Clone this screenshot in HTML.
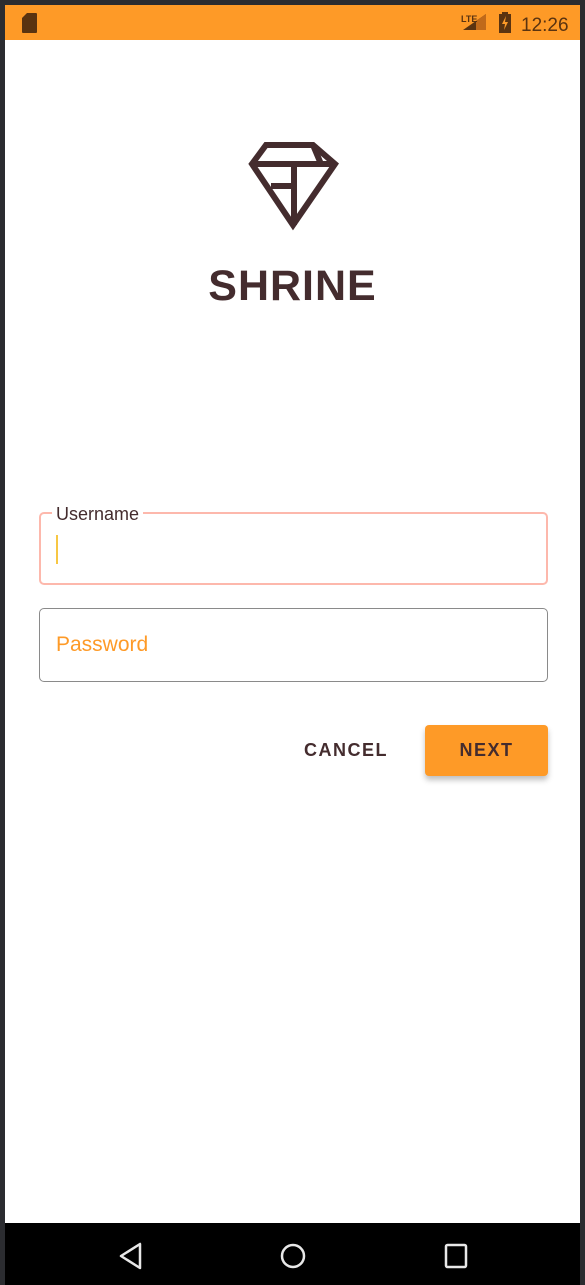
<!DOCTYPE html>
<html><head><style>
body{margin:0;width:585px;height:1285px;background:#2b2c30;position:relative;overflow:hidden;font-family:"Liberation Sans",sans-serif}
.scr{position:absolute;left:5px;top:5px;width:575px;height:1218px;background:#fff}
.sb{position:absolute;left:5px;top:5px;width:575px;height:35px;background:#fe9a27}
.nav{position:absolute;left:5px;top:1223px;width:575px;height:62px;background:#000}
.t{position:absolute;color:#442c2e}
</style></head><body>
<div class="scr"></div>
<div class="sb"></div>
<svg style="position:absolute;left:0;top:0" width="585" height="40">
<path d="M27 13h9a1 1 0 0 1 1 1v18a1 1 0 0 1-1 1h-13a1 1 0 0 1-1-1v-14z" fill="#5a3310"/>
<path d="M463 30l23-16v16z" fill="#5a3310"/><path d="M476 21l10-7v16h-10z" fill="#c06a1a"/>
<text x="461" y="22" font-size="9" font-weight="bold" fill="#5a3310" font-family="Liberation Sans">LTE</text>
<rect x="499" y="14" width="12" height="19" fill="#5a3310"/><rect x="502" y="12" width="6" height="3" fill="#5a3310"/>
<path d="M506 16l-4 8h3l-1 6 4-8h-3z" fill="#fe9a27"/>
<text x="521" y="31" font-size="19" fill="#5a3310" font-family="Liberation Sans">12:26</text>
</svg>
<svg style="position:absolute;left:0;top:0" width="585" height="320">
<g fill="none" stroke="#442c2e" stroke-width="6" stroke-linejoin="miter">
<path d="M266 145h47l22 19l-42 61l-41-61z"/>
<path d="M253 164h81M294 164v61M271 186h23M313 145l8 19"/>
</g>
</svg>
<div class="t" style="left:0;width:585px;text-align:center;top:262px;font-size:43px;font-weight:bold;letter-spacing:1px">SHRINE</div>
<div style="position:absolute;left:39px;top:512px;width:505px;height:69px;border:2px solid #fdb8ac;border-radius:5px"></div>
<div class="t" style="left:52px;top:504px;padding:0 4px;background:#fff;font-size:18px">Username</div>
<div style="position:absolute;left:56px;top:535px;width:2px;height:29px;background:#f7c744"></div>
<div style="position:absolute;left:39px;top:608px;width:507px;height:72px;border:1px solid #8a8a8a;border-radius:5px"></div>
<div style="position:absolute;left:56px;top:633px;font-size:21px;color:#fe9a27">Password</div>
<div class="t" style="left:304px;top:740px;font-size:18px;font-weight:bold;letter-spacing:1.5px">CANCEL</div>
<div style="position:absolute;left:425px;top:725px;width:123px;height:51px;background:#fe9a27;border-radius:4px;box-shadow:0 4px 6px rgba(0,0,0,.25);color:#442c2e;font-size:18px;font-weight:bold;letter-spacing:1.5px;text-align:center;line-height:51px">NEXT</div>
<div class="nav"></div>
<svg style="position:absolute;left:0;top:1223px" width="585" height="62">
<g fill="none" stroke="#e8e8e8" stroke-width="2.5" stroke-linejoin="round">
<path d="M140 21v24l-19-12z"/>
<circle cx="293" cy="33" r="11"/>
<rect x="446" y="22" width="20" height="22" rx="1.5"/>
</g>
</svg>
</body></html>
